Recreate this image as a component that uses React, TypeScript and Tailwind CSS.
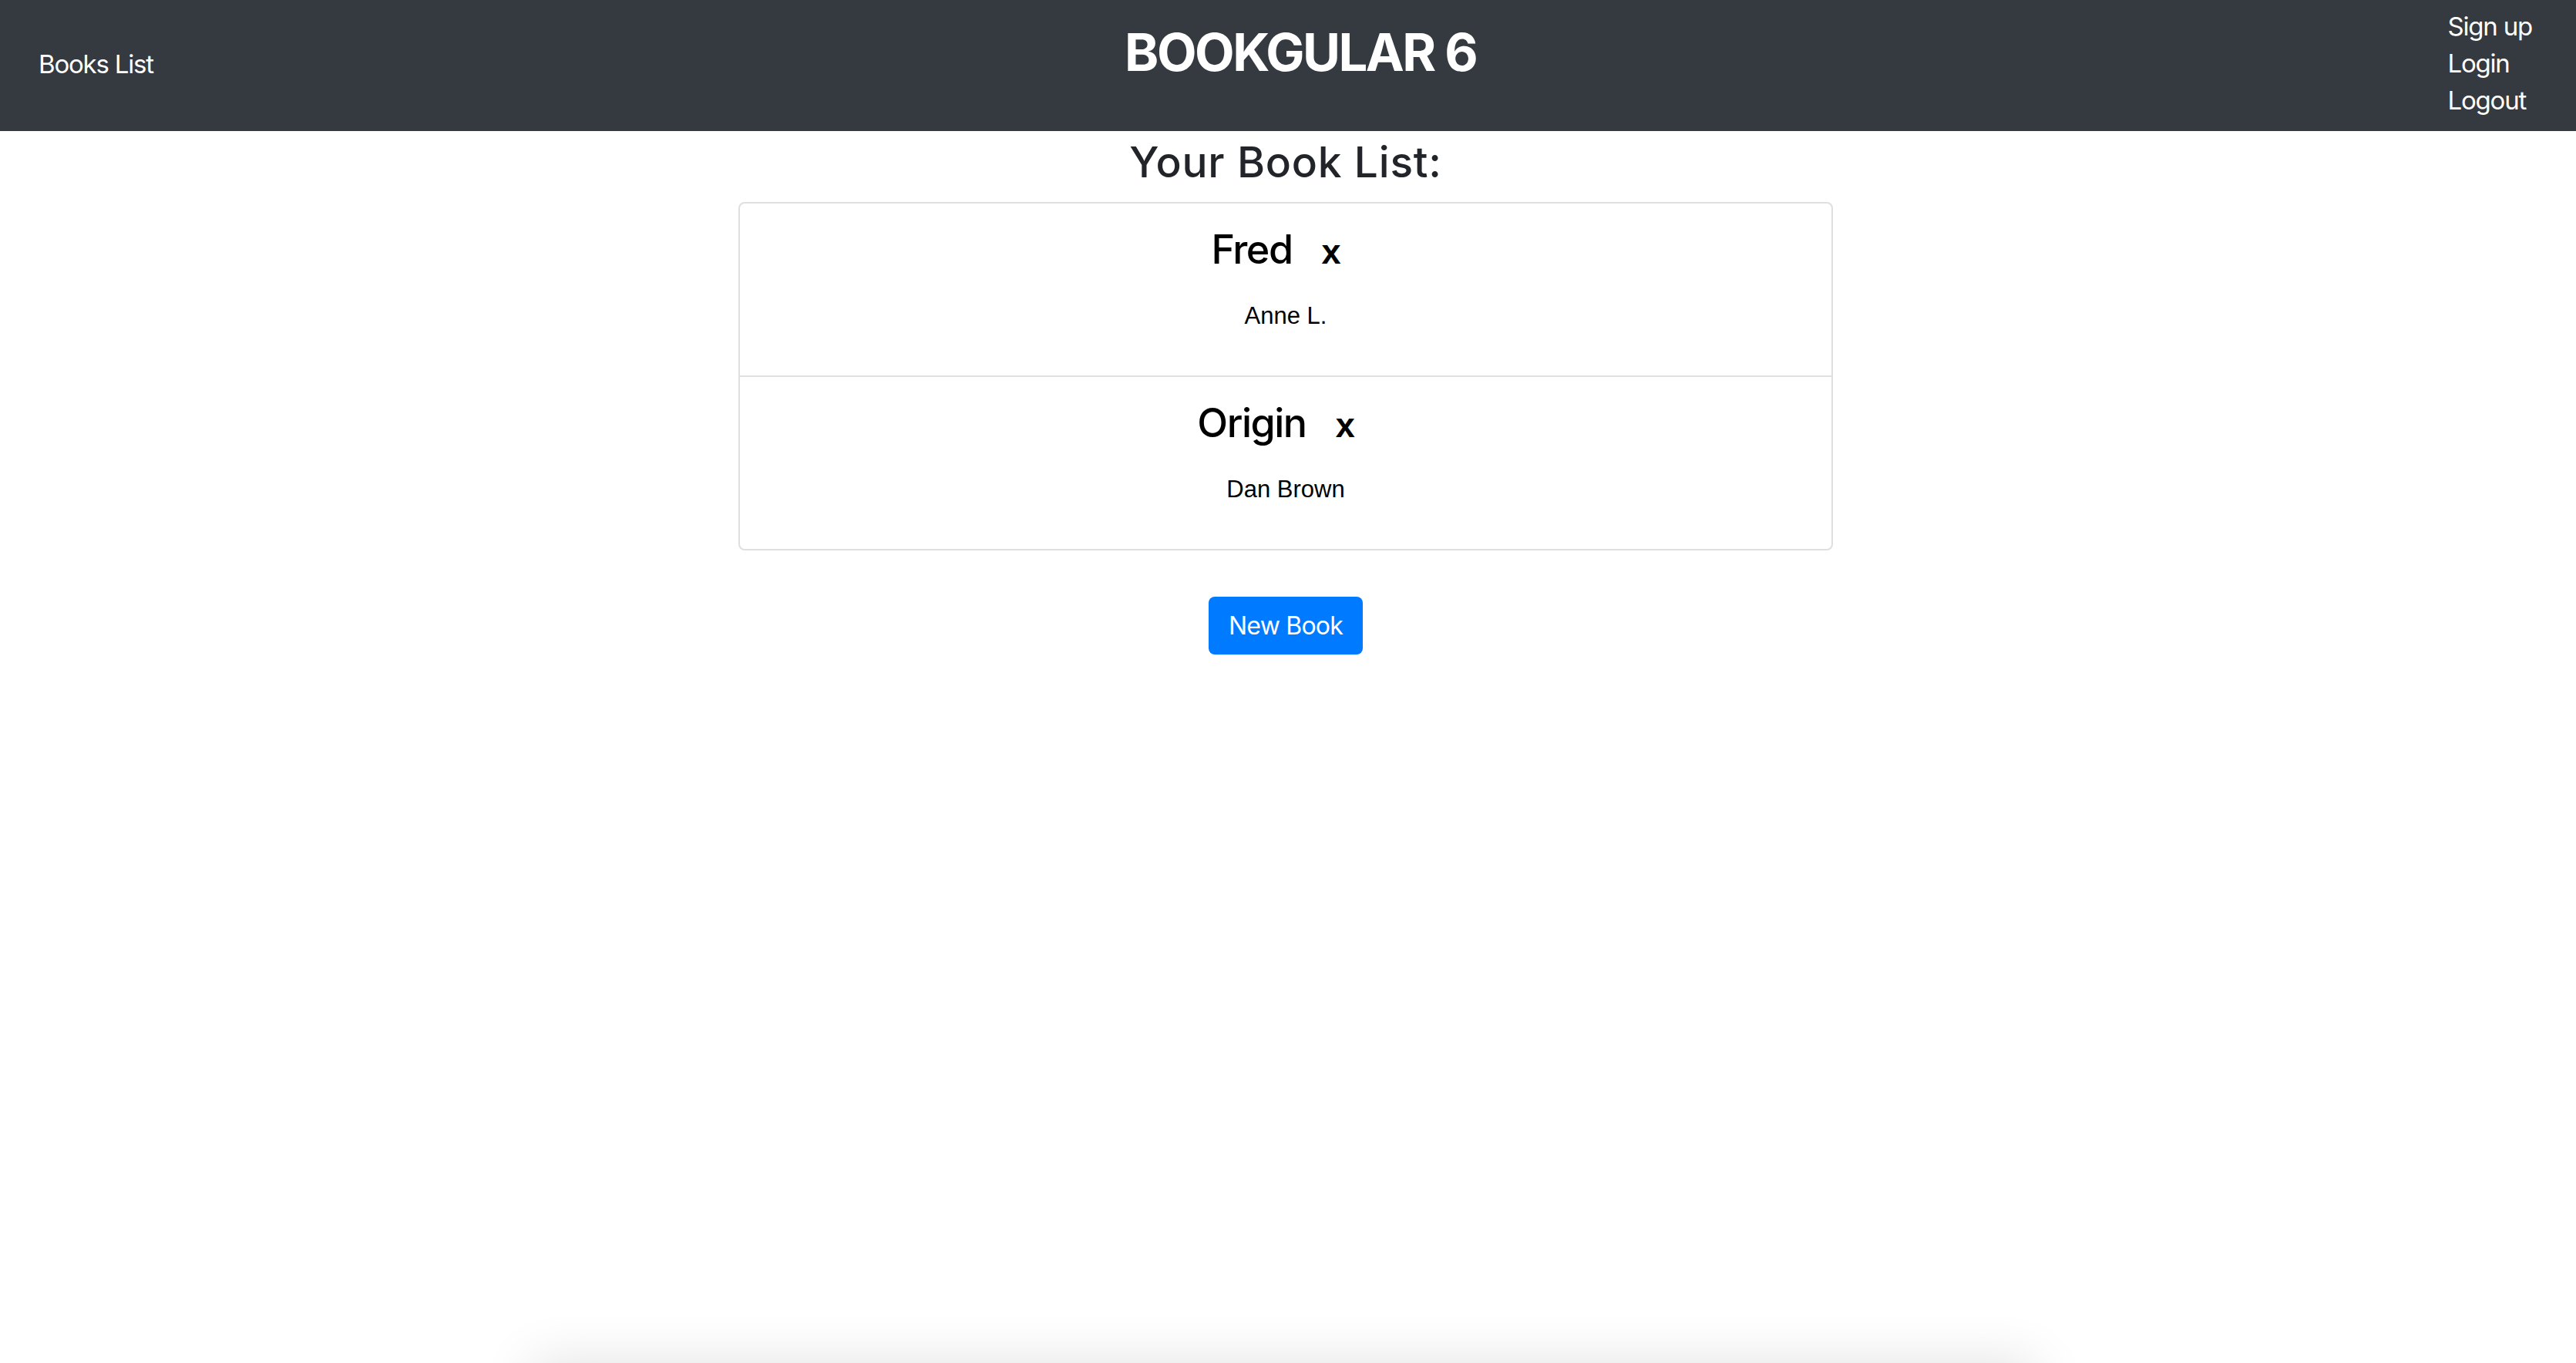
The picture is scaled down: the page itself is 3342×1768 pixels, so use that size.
import React from "react";

const sf = { fontFamily: "Inter, 'Noto Sans', sans-serif" };
const helv = { fontFamily: "'Liberation Sans', Arial, sans-serif" };

const books = [
  { title: "Fred", author: "Anne L." },
  { title: "Origin", author: "Dan Brown" },
];

export default function App() {
  return (
    <div className="relative h-[1768px] overflow-hidden bg-white" style={sf}>
      <header className="flex h-[170px] items-start justify-between bg-[#343a40] pl-[50px] pr-[57px] text-white">
        <a className="mt-[59px] block text-[33px] leading-[48px] tracking-[-1.2px]">Books List</a>
        <h1 className="mt-[28px] text-[67px] font-bold leading-[80px] tracking-[-2.5px]">BOOKGULAR 6</h1>
        <nav className="flex flex-col pt-[10px] text-[33px] leading-[48px] tracking-[-1.2px]">
          <a>Sign up</a>
          <a>Login</a>
          <a>Logout</a>
        </nav>
      </header>

      <main className="flex flex-col items-center pr-[6px]">
        <h2 className="mt-[10px] text-[55px] font-medium leading-[61px] tracking-[0.8px] text-[#212529]">
          Your Book List:
        </h2>
        <div className="mt-[21px] w-[1420px] rounded-[8px] border-2 border-[#dfdfdf]">
          {books.map((b, i) => (
            <div
              key={b.title}
              className={`flex flex-col items-center pt-[29px] pb-[54px] text-black ${
                i > 0 ? "border-t-2 border-[#dfdfdf]" : ""
              }`}
            >
              <div className="flex items-baseline">
                <span className="text-[52px] font-medium leading-[62px] tracking-[-1.5px]">{b.title}</span>
                <button className="ml-[38px] mr-[25px] text-[45px] font-bold leading-[62px]" style={helv}>
                  x
                </button>
              </div>
              <p className="mt-[29px] text-[31px] leading-[46px]" style={helv}>
                {b.author}
              </p>
            </div>
          ))}
        </div>
        <button className="mt-[60px] flex h-[75px] w-[200px] items-center justify-center rounded-[8px] bg-[#007bff] text-[32px] tracking-[-0.8px] text-white">
          New Book
        </button>
      </main>

      <div className="pointer-events-none absolute left-[690px] top-[1768px] h-[200px] w-[1950px] shadow-[0_0_70px_rgba(0,0,0,0.12)]" />
    </div>
  );
}
